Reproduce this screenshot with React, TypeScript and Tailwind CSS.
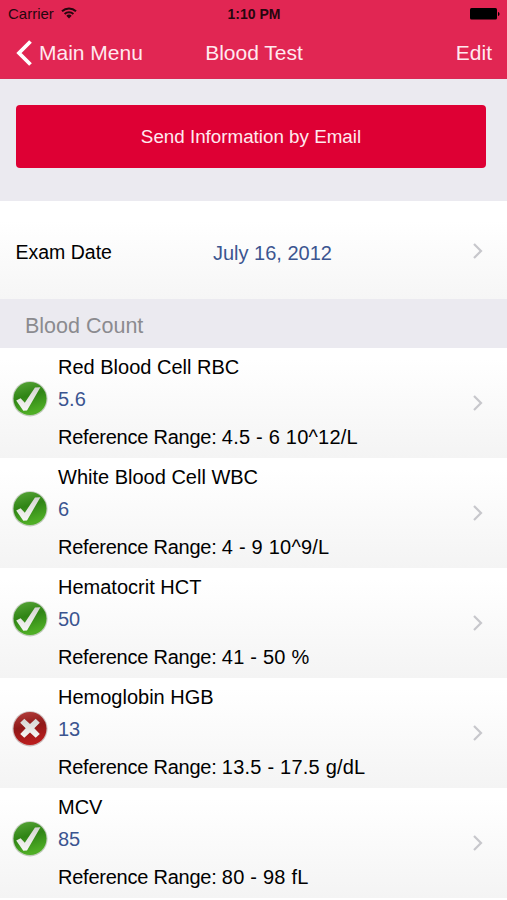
type Status = 'ok' | 'bad';

interface TestResult {
  name: string;
  value: string;
  range: string;
  status: Status;
}

const RESULTS: TestResult[] = [
  { name: 'Red Blood Cell RBC', value: '5.6', range: '4.5 - 6 10^12/L', status: 'ok' },
  { name: 'White Blood Cell WBC', value: '6', range: '4 - 9 10^9/L', status: 'ok' },
  { name: 'Hematocrit HCT', value: '50', range: '41 - 50 %', status: 'ok' },
  { name: 'Hemoglobin HGB', value: '13', range: '13.5 - 17.5 g/dL', status: 'bad' },
  { name: 'MCV', value: '85', range: '80 - 98 fL', status: 'ok' },
];

export default function App() {
  return (
    <div className="w-full h-[900px] overflow-hidden bg-white text-black font-['Liberation_Sans',Arial,sans-serif] text-[20px] leading-6">
      <header className="h-[79px] bg-[#e12653] border-b border-[#d92a55]">
        <StatusBar />
        <NavBar />
      </header>
      <div className="h-[122px] bg-[#ebeaf0] px-4 pt-[26px] pr-[21px]">
        <button className="block w-full h-[63px] rounded-[4px] bg-[#de0034] text-[18.8px] text-[#ffe9ef]">
          Send Information by Email
        </button>
      </div>
      <div className="h-[98px] flex items-center pl-[15.5px] pr-[23px] bg-linear-to-b from-white from-20% to-[#f6f6f6]">
        <span className="w-[197.5px] pt-[3px] text-[19.5px]">Exam Date</span>
        <span className="pt-[5px] text-[#3b5590]">July 16, 2012</span>
        <Chevron className="mt-[2px]" />
      </div>
      <h2 className="h-[49px] flex items-center pl-[25px] pt-1 bg-[#ebeaf0] text-[21.5px] text-[#8b8b8f]">Blood Count</h2>
      <ul>
        {RESULTS.map((r) => (
          <ResultRow key={r.name} result={r} />
        ))}
      </ul>
    </div>
  );
}

function StatusBar() {
  return (
    <div className="h-7 grid grid-cols-3 items-center pl-2 pr-[7px] text-[#26060e]">
      <div className="flex items-center gap-[7px] text-[15px]">
        Carrier
        <svg className="w-4 h-3 mt-[-2px]" viewBox="0 0 16 12" fill="none" stroke="currentColor" strokeWidth={2}>
          <path d="M1 4.2a10.2 10.2 0 0 1 14 0" />
          <path d="M3.6 7a6.4 6.4 0 0 1 8.8 0" />
          <path d="M8 11.6 5.3 8.8a4 4 0 0 1 5.4 0Z" fill="currentColor" stroke="none" />
        </svg>
      </div>
      <span className="text-center text-[14px] font-bold">1:10 PM</span>
      <svg className="w-[30px] h-3 justify-self-end" viewBox="0 0 30 12" fill="#000">
        <rect width="27" height="11.5" rx="1.5" />
        <path d="M28 4c2 .3 2 3.700 0 4Z" />
      </svg>
    </div>
  );
}

function NavBar() {
  return (
    <nav className="h-[49px] grid grid-cols-3 items-center pl-4 pr-[15px] text-[21px] text-[#ffe9ef]">
      <button className="flex items-center gap-[7px] whitespace-nowrap">
        <svg className="w-4 h-[26px]" viewBox="0 0 16 26" fill="none" stroke="#fff" strokeWidth={3.8}>
          <path d="M14.500 1.500 3 13l11.500 11.500" />
        </svg>
        Main Menu
      </button>
      <h1 className="text-center">Blood Test</h1>
      <button className="text-right">Edit</button>
    </nav>
  );
}

function ResultRow({ result }: { result: TestResult }) {
  return (
    <li className="h-[110px] flex items-center pl-3 pr-[23px] bg-linear-to-b from-white from-10% to-[#f4f4f4]">
      <StatusIcon status={result.status} />
      <div className="h-full pl-[10px] pt-[7px]">
        <p>{result.name}</p>
        <p className="mt-2 text-[#3b5590]">{result.value}</p>
        <p className="mt-[14px] tracking-[0.22px]">
          <span className="tracking-[-0.24px]">Reference Range: </span>
          {result.range}
        </p>
      </div>
      <Chevron />
    </li>
  );
}

function StatusIcon({ status }: { status: Status }) {
  const ok = status === 'ok';
  return (
    <svg className="w-9 h-[37px] mt-[-9px] shrink-0" viewBox="0 0 36 37">
      <defs>
        <linearGradient id="green" x1="0" y1="0" x2="0.3" y2="1">
          <stop offset="0" stopColor="#5aa83a" />
          <stop offset="0.5" stopColor="#2f8415" />
          <stop offset="1" stopColor="#4fae25" />
        </linearGradient>
        <linearGradient id="red" x1="0" y1="0" x2="0.2" y2="1">
          <stop offset="0" stopColor="#b5403d" />
          <stop offset="0.5" stopColor="#8f1818" />
          <stop offset="1" stopColor="#b91d1d" />
        </linearGradient>
        <linearGradient id="mark" x1="0" y1="0" x2="0" y2="1">
          <stop offset="0" stopColor="#d5d5d2" />
          <stop offset="1" stopColor="#f7f7f5" />
        </linearGradient>
      </defs>
      <circle cx="18" cy="18.800" r="17.600" fill={ok ? '#a9b8a3' : '#b9a3a3'} opacity="0.7" />
      <circle cx="18" cy="18.600" r="16.500" fill={ok ? 'url(#green)' : 'url(#red)'} />
      {ok ? (
        <path d="M4.200 20.600 8.600 18.200 12.800 22.800 23 7.400 28.400 7.200 15 30.400 11.300 30.800Z" fill="url(#mark)" />
      ) : (
        <path
          d="M12.300 8.800 18 14.100 23.700 8.800 27.800 12.700 22.300 18.300 27.800 23.900 23.700 27.800 18 22.500 12.300 27.800 8.200 23.900 13.700 18.300 8.200 12.700Z"
          fill="url(#mark)"
        />
      )}
    </svg>
  );
}

function Chevron({ className = '' }: { className?: string }) {
  return (
    <svg className={`w-3 h-4 ml-auto shrink-0 ${className}`} viewBox="0 0 12 16" fill="none" stroke="#c7c7cc" strokeWidth={2.2}>
      <path d="M2 1l7 7-7 7" />
    </svg>
  );
}
